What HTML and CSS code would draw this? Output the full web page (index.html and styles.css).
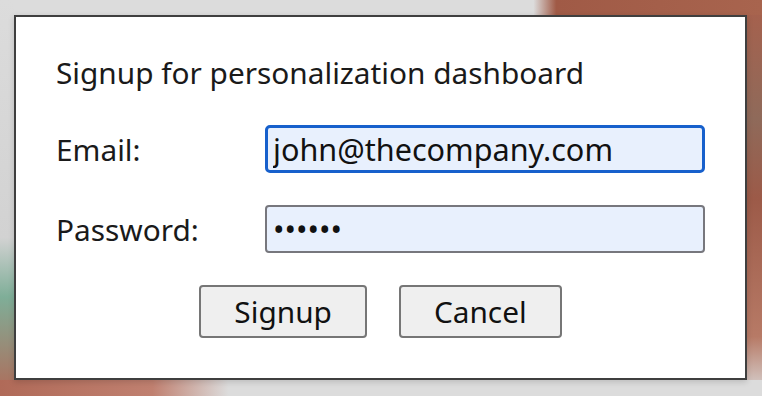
FILE: index.html
```html
<!DOCTYPE html>
<html>
<head>
<meta charset="utf-8">
<link rel="stylesheet" href="styles.css">
</head>
<body>
<div class="backdrop">
  <div class="dialog">
    <div class="title">Signup for personalization dashboard</div>
    <div class="form">
      <label class="label" for="email">Email:</label>
      <input class="field focused" id="email" type="text" value="john@thecompany.com">
      <label class="label" for="pw">Password:</label>
      <input class="field" id="pw" type="password" value="secret">
    </div>
    <div class="buttons">
      <button class="btn">Signup</button>
      <button class="btn">Cancel</button>
    </div>
  </div>
</div>
</body>
</html>
```
FILE: styles.css
```css
html, body {
  margin: 0;
  padding: 0;
}
body {
  width: 762px;
  height: 396px;
  overflow: hidden;
  font-family: "Noto Sans", "Open Sans", sans-serif;
  color: #1a1a1a;
}
.backdrop {
  width: 762px;
  height: 396px;
  padding: 15px 0 0 14px;
  box-sizing: border-box;
  background:
    linear-gradient(90deg, rgba(216,216,216,0) 0%, rgba(216,216,216,0) 70%, rgba(160,90,70,1) 73%, rgba(168,100,78,1) 100%) top / 100% 15px no-repeat,
    linear-gradient(90deg, #b06a58 0%, #c08070 20%, #dcdcdc 30%, #dcdcdc 100%) bottom / 100% 16px no-repeat,
    linear-gradient(180deg, #a8604c 0%, #8f6a5a 30%, #9c5a48 50%, #b77a66 85%, #dadada 100%) right / 15px 100% no-repeat,
    linear-gradient(180deg, #dcdcdc 0%, #d2d2d2 60%, #7fae98 75%, #b06a58 100%) left / 14px 100% no-repeat,
    #dcdcdc;
}
.dialog {
  width: 733px;
  height: 365px;
  box-sizing: border-box;
  background: #ffffff;
  border: 2px solid #3f3f3f;
  padding: 39px 0 0 40px;
  box-shadow: 0 2px 6px rgba(0,0,0,0.15);
}
.title {
  font-size: 29.8px;
  line-height: 34px;
}
.form {
  display: grid;
  grid-template-columns: 209px 440px;
  row-gap: 32px;
  align-items: center;
  margin-top: 35px;
}
.label {
  font-size: 29.8px;
}
.field {
  width: 440px;
  height: 48px;
  box-sizing: border-box;
  margin: 0;
  background: #e8f0fd;
  border: 2px solid #77777d;
  border-radius: 4px;
  padding: 0 0 0 6px;
  font-family: "Noto Sans", "Open Sans", sans-serif;
  font-size: 30.6px;
  color: #111;
  outline: none;
}
.field.focused {
  border: 3px solid #1760cc;
  border-radius: 5px;
  padding-left: 5px;
}
.buttons {
  display: flex;
  justify-content: center;
  gap: 32px;
  margin-top: 32px;
  padding-right: 40px;
}
.btn {
  height: 53px;
  box-sizing: border-box;
  background: #efefef;
  border: 2px solid #767676;
  border-radius: 4px;
  padding: 0 33px;
  font-family: "Noto Sans", "Open Sans", sans-serif;
  font-size: 29.8px;
  color: #111;
  margin: 0;
}
```
